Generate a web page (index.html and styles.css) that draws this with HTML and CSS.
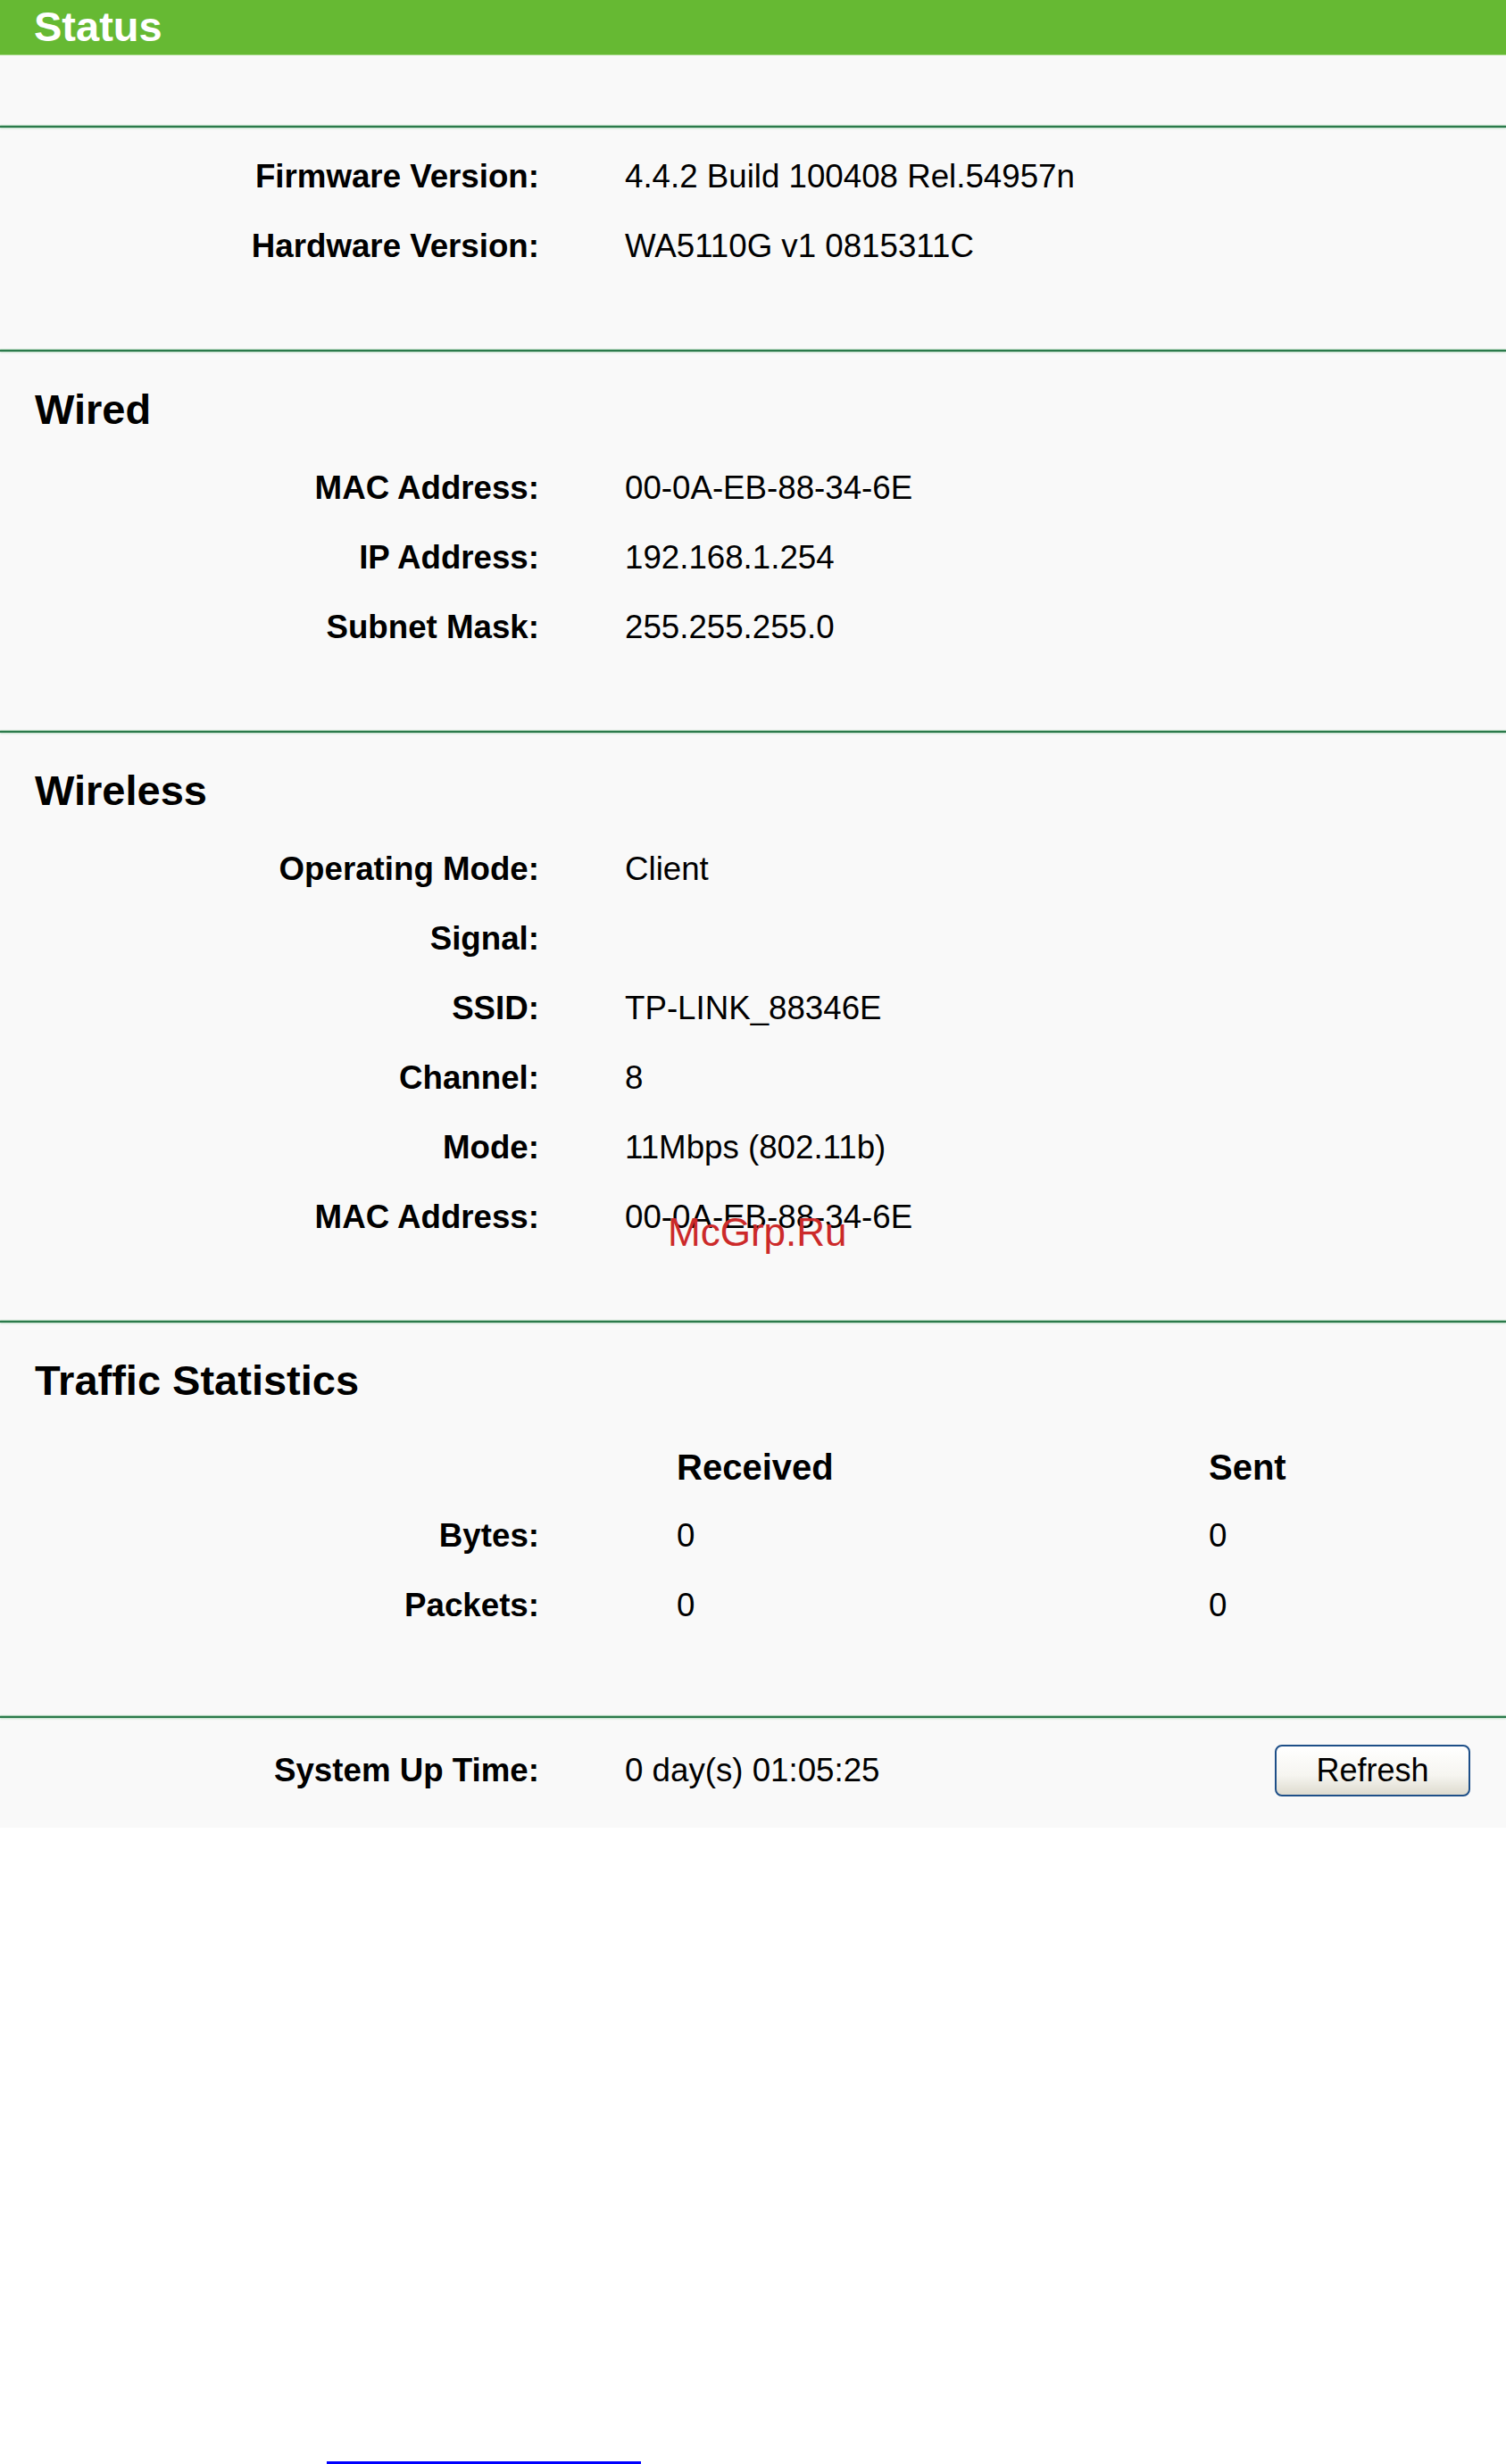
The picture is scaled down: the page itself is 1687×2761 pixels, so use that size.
FILE: index.html
```html
<!DOCTYPE html>
<html lang="en">
<head>
    <meta charset="UTF-8">
    <title>Status</title>
    <link rel="stylesheet" href="styles.css">
</head>
<body>
    <div class="title-bar">
        <h1>Status</h1>
    </div>

    <div class="panel">
        <div class="top-gap"></div>
        <hr class="divider">

        <section class="block">
            <div class="row"><span class="label">Firmware Version:</span><span class="value">4.4.2 Build 100408 Rel.54957n</span></div>
            <div class="row"><span class="label">Hardware Version:</span><span class="value">WA5110G v1 0815311C</span></div>
        </section>
        <hr class="divider">

        <section class="block">
            <h2>Wired</h2>
            <div class="row"><span class="label">MAC Address:</span><span class="value">00-0A-EB-88-34-6E</span></div>
            <div class="row"><span class="label">IP Address:</span><span class="value">192.168.1.254</span></div>
            <div class="row"><span class="label">Subnet Mask:</span><span class="value">255.255.255.0</span></div>
        </section>
        <hr class="divider">

        <section class="block">
            <h2>Wireless</h2>
            <div class="row"><span class="label">Operating Mode:</span><span class="value">Client</span></div>
            <div class="row"><span class="label">Signal:</span><span class="value"></span></div>
            <div class="row"><span class="label">SSID:</span><span class="value">TP-LINK_88346E</span></div>
            <div class="row"><span class="label">Channel:</span><span class="value">8</span></div>
            <div class="row"><span class="label">Mode:</span><span class="value">11Mbps (802.11b)</span></div>
            <div class="row"><span class="label">MAC Address:</span><span class="value">00-0A-EB-88-34-6E</span></div>
        </section>
        <hr class="divider">

        <section class="block traffic">
            <h2>Traffic Statistics</h2>
            <div class="stats">
                <div class="stats-row stats-head"><span></span><span class="col-head">Received</span><span class="col-head">Sent</span></div>
                <div class="stats-row"><span class="label">Bytes:</span><span class="num">0</span><span class="num">0</span></div>
                <div class="stats-row"><span class="label">Packets:</span><span class="num">0</span><span class="num">0</span></div>
            </div>
        </section>
        <hr class="divider">

        <section class="block uptime">
            <div class="row uptime-row">
                <span class="label">System Up Time:</span>
                <span class="value">0 day(s) 01:05:25</span>
                <button class="refresh-btn" type="button">Refresh</button>
            </div>
        </section>
    </div>

    <div class="link-line"></div>

    <div class="watermark">McGrp.Ru</div>
</body>
</html>
```

FILE: styles.css
```css
html, body {
    margin: 0;
    padding: 0;
}
body {
    position: relative;
    background-color: #fff;
    color: #000;
    font-family: "Liberation Sans", Arial, sans-serif;
}

/* green title bar */
.title-bar {
    height: 61px;
    background-color: #66b933;
    border-bottom: 1px solid #a3d884;
}
.title-bar h1 {
    margin: 0;
    padding-left: 38px;
    font-size: 47px;
    line-height: 60px;
    font-weight: bold;
    color: #fff;
}

.panel {
    background-color: #f9f9f9;
}
.top-gap {
    height: 79px;
}

.divider {
    margin: 0;
    border: none;
    height: 2px;
    background-color: #2b7a4b;
    box-shadow: 0 -1px 1px #a3cbb0, 0 1px 2px #b9dbc4;
}

.block {
    padding: 16px 0 77px 0;
}
.block h2 {
    margin: 0;
    padding-left: 39px;
    height: 98px;
    font-size: 47px;
    line-height: 98px;
    font-weight: bold;
}

.row {
    display: grid;
    grid-template-columns: 604px 1fr;
    height: 78px;
    align-items: center;
    font-size: 36.7px;
    line-height: 78px;
}
.label {
    text-align: right;
    font-weight: bold;
}
.value {
    padding-left: 96px;
}

/* traffic table */
.traffic {
    padding-bottom: 85px;
}
.stats {
    padding-top: 10px;
}
.stats-row {
    display: grid;
    grid-template-columns: 604px 154px 596px 1fr;
    height: 78px;
    font-size: 36.7px;
    line-height: 78px;
}
.stats-row .label {
    grid-column: 1;
}
.stats-row span:nth-child(2) {
    grid-column: 3;
}
.stats-row span:nth-child(3) {
    grid-column: 4;
}
.stats-head {
    height: 76px;
    line-height: 76px;
}
.col-head {
    font-size: 40px;
    font-weight: bold;
}

/* bottom row */
.uptime {
    padding: 20px 0 25px 0;
}
.uptime-row {
    grid-template-columns: 604px 1fr auto;
}
.refresh-btn {
    box-sizing: border-box;
    width: 219px;
    height: 58px;
    margin-right: 40px;
    padding: 0;
    border: 2px solid #1e4f88;
    border-radius: 8px;
    background: linear-gradient(#ffffff, #f6f5f0 60%, #dedbcf);
    font-family: "Liberation Sans", Arial, sans-serif;
    font-size: 36px;
    color: #000;
    cursor: pointer;
}

.link-line {
    margin: 710px 0 0 366px;
    width: 352px;
    height: 3px;
    background-color: #0000ff;
}

.watermark {
    position: absolute;
    left: 748px;
    top: 1359px;
    font-size: 44px;
    line-height: 44px;
    color: #cc2a2a;
}
```
